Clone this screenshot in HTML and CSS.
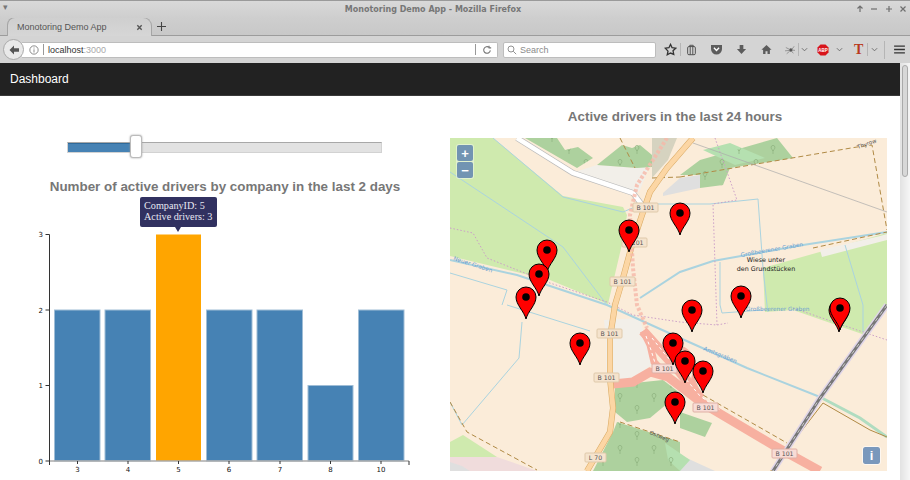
FILE: index.html
```html
<!DOCTYPE html>
<html lang="en">
<head>
<meta charset="utf-8">
<title>Monotoring Demo App</title>
<link rel="stylesheet" href="styles.css">
</head>
<body>
<header class="chrome">
  <div class="titlebar">
    <span class="win-menu">▾</span>
    <span class="win-title">Monotoring Demo App - Mozilla Firefox</span>
    <div class="win-btns">
      <svg class="win-icon" viewBox="0 0 8 8"><path d="M4 7V1M1.500 3.500L4 1l2.500 2.500"/></svg>
      <svg class="win-icon" viewBox="0 0 8 8"><path d="M1 4h6"/></svg>
      <svg class="win-icon" viewBox="0 0 8 8"><path d="M1 4h6M4 1v6"/></svg>
      <svg class="win-icon" viewBox="0 0 8 8"><path d="M1.500 1.500l5 5M6.500 1.500l-5 5"/></svg>
    </div>
  </div>
  <div class="tabstrip">
    <div class="tab">
      <span class="tab-label">Monotoring Demo App</span>
      <svg class="tab-close" viewBox="0 0 8 8"><path d="M1.500 1.500l5 5M6.500 1.500l-5 5"/></svg>
    </div>
    <svg class="new-tab" viewBox="0 0 10 10"><path d="M5 0v10M0 5h10"/></svg>
  </div>
  <div class="navrow">
    <div class="back-btn"><svg viewBox="0 0 12 12"><path d="M6 1.500L1.500 6 6 10.500V7.800h5V4.200H6z"/></svg></div>
    <div class="urlbar">
      <svg class="info-icon" viewBox="0 0 12 12"><circle cx="6" cy="6" r="5"/><path d="M6 5.200V9M6 3v1.200"/></svg>
      <span class="url-sep"></span>
      <span class="url-host">localhost</span><span class="url-port">:3000</span>
      <span class="url-grow"></span>
      <span class="url-sep url-sep-end"></span>
      <svg class="reload-icon" viewBox="0 0 12 12"><path d="M10 6.500A4 4 0 1 1 8.500 2.800M8.500 .8v2.600H11"/></svg>
    </div>
    <div class="searchbar">
      <svg class="search-icon" viewBox="0 0 12 12"><circle cx="4.800" cy="4.800" r="3.600"/><path d="M7.500 7.500L11 11"/></svg>
      <span class="search-text">Search</span>
    </div>
    <div class="toolbar">
      <svg class="tool t-star" viewBox="0 0 14 14"><path d="M7 1.500l1.700 3.600 3.900.5-2.900 2.700.8 3.900L7 10.800l-3.500 1.900.8-3.900L1.400 5.600l3.900-.5z"/></svg>
      <span class="tool-sep sep-a"></span>
      <svg class="tool t-clip" viewBox="0 0 12 14"><rect x="1.500" y="3" width="9" height="9.500" rx="1.500"/><path d="M4 3V1.500h4V3M4.500 3v9.500M7.500 3v9.500"/></svg>
      <svg class="tool t-pocket" viewBox="0 0 14 12"><path class="solid" d="M1 1h12v4.500a6 6 0 0 1-12 0z"/><path class="cut" d="M4.200 4.200L7 7l2.800-2.800"/></svg>
      <svg class="tool t-down" viewBox="0 0 12 12"><path class="solid" d="M4 1h4v4.500h3L6 11 1 5.500h3z"/></svg>
      <svg class="tool t-home" viewBox="0 0 12 12"><path class="solid" d="M6 1L.5 6.200h1.800V11h2.600V7.800h2.200V11h2.600V6.200h1.800z"/></svg>
      <svg class="tool t-spider" viewBox="0 0 14 12"><circle class="spider-body" cx="8" cy="6" r="2"/><path d="M2 3l4 2M1 7l5-.5M3 10.500l3.500-3M12 1.500L9.500 5M13 6.500l-4-.5M11 10L9 7.500"/></svg>
      <span class="tool-sep sep-s"></span>
      <svg class="tool t-chev t-chev-s" viewBox="0 0 8 5"><path d="M1 1l3 3 3-3"/></svg>
      <svg class="tool t-abp" viewBox="0 0 12 12"><path class="solid" d="M3.500 .5h5l3 3v5l-3 3h-5l-3-3v-5z"/><text x="6" y="7.700">ABP</text></svg>
      <svg class="tool t-chev t-chev-a" viewBox="0 0 8 5"><path d="M1 1l3 3 3-3"/></svg>
      <span class="t-letter">T</span>
      <span class="tool-sep sep-b"></span>
      <svg class="tool t-chev t-chev-last" viewBox="0 0 8 5"><path d="M1 1l3 3 3-3"/></svg>
      <span class="tool-sep sep-c"></span>
      <svg class="tool t-menu" viewBox="0 0 12 10"><path d="M0 1.200h12M0 5h12M0 8.800h12"/></svg>
    </div>
  </div>
</header>

<div class="viewport">
  <main class="app">
    <nav class="navbar"><span class="brand">Dashboard</span></nav>
    <div class="columns">
      <section class="left">
        <div class="slider">
          <div class="slider-fill"></div>
          <div class="slider-handle"></div>
        </div>
        <h2 class="heading heading-chart">Number of active drivers by company in the last 2 days</h2>
        <div class="chart">
          <div class="tooltip">CompanyID: 5<br>Active drivers: 3</div>
          <svg class="chart-svg" viewBox="0 0 450 260">
            <g class="bars">
              <rect x="54.500" y="85" width="45.500" height="151"/>
              <rect x="105" y="85" width="45.500" height="151"/>
              <rect class="bar-hi" x="156" y="9.500" width="45" height="226.500"/>
              <rect x="206.500" y="85" width="45.500" height="151"/>
              <rect x="257" y="85" width="45.500" height="151"/>
              <rect x="308" y="160.500" width="45" height="75.500"/>
              <rect x="358.500" y="85" width="45.500" height="151"/>
            </g>
            <path class="axis-x" d="M49.500 236H409"/>
            <path class="axis" d="M45.500 9.500h4V240M45.500 85h4M45.500 160.500h4M45.500 236h4M77.500 236v3M128 236v3M178.500 236v3M229 236v3M280 236v3M330.500 236v3M381 236v3M409 236v4"/>
            <g class="ticks-y">
              <text x="43" y="12">3</text><text x="43" y="87.500">2</text><text x="43" y="163">1</text><text x="43" y="238.500">0</text>
            </g>
            <g class="ticks-x">
              <text x="77.500" y="247">3</text><text x="128" y="247">4</text><text x="178.500" y="247">5</text><text x="229" y="247">6</text><text x="280" y="247">7</text><text x="330.500" y="247">8</text><text x="381" y="247">10</text>
            </g>
          </svg>
        </div>
      </section>
      <section class="right">
        <h2 class="heading heading-map">Active drivers in the last 24 hours</h2>
        <div class="map">
          <svg class="map-svg" viewBox="450 138 437 333">
            <defs>
              <symbol id="pin" viewBox="-11 -11 22 34" overflow="visible">
                <path class="pin-body" d="M0 22C-2 14-10 8-10 0A10 10 0 1 1 10 0C10 8 2 14 0 22Z"/>
                <circle class="pin-dot" r="3.800"/>
              </symbol>
              <pattern id="trees" width="34" height="26" patternUnits="userSpaceOnUse">
                <path class="tree" d="M8 12V8M8 9L6 6M8 9l2-3M6 6a1.500 2 0 0 1 4 0M25 24v-4M25 21l-2-3M25 21l2-3M23 18a1.500 2 0 0 1 4 0"/>
              </pattern>
            </defs>
            <rect class="land" x="450" y="138" width="437" height="333"/>
            <!-- areas -->
            <path class="meadow" d="M450 138H493L563 196 623 207 627 215 623 240 608 304 550 280 450 256Z"/>
            <path class="meadow" d="M763 268L887 233V305L865 335 793 310 765 312Z"/>
            <path class="meadow" d="M450 442L463 435 497 457H450Z"/>
            <path class="residential" d="M450 457H497L537 471H450Z"/>
            <path class="greyland" d="M450 471V462L462 466 470 471Z"/>
            <path class="greyland" d="M663 193L680 178 700 175V188L663 196Z"/>
            <path class="greyland" d="M665 442L680 455 715 471H665Z"/>
            <path class="pale" d="M575 172L597 165 637 168 650 165 640 190 635 196Z"/>
            <path class="pale" d="M604 320L640 318 652 365 632 378 606 383 606 340Z"/>
            <path class="pale" d="M820 250L880 236 887 234 887 240 822 257Z"/>
            <path class="tan" d="M652 138H677L668 160 652 178Z"/>
            <path class="forest" d="M525 138H557L565 150 578 147 593 158 577 168Z"/>
            <path class="forest" d="M597 165L622 145 632 148 640 145 652 155 652 167 637 168Z"/>
            <path class="forest" d="M680 175L700 160 777 138 793 158 730 168 723 185 700 188 700 175Z"/>
            <path class="forest" d="M615 385L663 380 680 393 650 418 627 422 615 412Z"/>
            <path class="forest" d="M617 422L680 442 680 471H593L613 432Z"/>
            <path class="forest" d="M680 412L712 423 705 437 680 428Z"/>
            <path class="forest" d="M658 345L668 352 665 358Z"/>
            <path class="forest-light" d="M665 443L690 460 680 471 668 460Z"/>
            <path class="forest-light" d="M703 150L730 143 765 158 735 165Z"/>
            <path class="trees-fill" d="M525 138H557L565 150 578 147 593 158 577 168Z"/>
            <path class="trees-fill" d="M597 165L622 145 640 145 652 155 652 167Z"/>
            <path class="trees-fill" d="M680 175L700 160 777 138 793 158 730 168 723 185 700 188Z"/>
            <path class="trees-fill" d="M615 385L663 380 680 393 650 418 627 422 615 412Z"/>
            <path class="trees-fill" d="M617 422L680 442 680 471H593L613 432Z"/>
            <!-- thin waters -->
            <path class="stream" d="M493 138L563 197 623 212 642 204H680L710 204 758 199 763 268 767 305 768 312"/>
            <path class="stream" d="M450 172L563 247 607 305"/>
            <path class="stream" d="M450 273L507 290 502 305M507 305L590 331M522 322L519 358 462 425 450 402"/>
            <path class="stream" d="M720 262V305L722 313 763 310M845 245L863 305V332"/>
            <!-- canals -->
            <path class="canal" d="M450 260L517 275 607 305 680 338 747 368 820 397"/>
            <path class="canal" d="M640 298L680 272 713 261 803 245 887 232"/>
            <path class="canal-green" d="M820 397L860 418 887 437"/>
            <!-- boundaries -->
            <path class="dotted" d="M450 228L473 233 487 258 550 283 607 302 633 315 680 322 717 325 728 323M715 138L737 200 713 204 717 325M793 308L863 332 887 340"/>
            <path class="border" d="M680 177L857 147 872 145 887 230M813 248L887 232M450 402L467 432 537 470M620 422L680 442M703 395L787 443M620 138L635 168M652 178L680 177"/>
            <path class="border-solid" d="M823 403L770 472M823 403L870 430 887 437"/>
            <path class="power" d="M693 143L887 212"/>
            <!-- roads -->
            <path class="road-white-case" d="M517 138L573 173 633 193 642 205"/>
            <path class="road-white" d="M517 138L573 173 633 193 642 205"/>
            <path class="trunk" d="M613 384L633 382 650 372 668 377 702 403 773 445 820 471"/>
            <path class="ramp-a" d="M643 331L650 345 654 362 668 377"/>
            <path class="ramp-b" d="M643 331L660 350 680 372 700 398"/>
            <path class="ramp-loop" d="M668 346Q686 345 692 358 696 368 693 380L703 402"/>
            <path class="trunk-dash" d="M646 336L651 350 655 363M652 338L664 353 680 372 700 396 720 410"/>
            <path class="primary-case" d="M693 138L667 168 650 192 642 215 632 245 623 278 615 305 610 338 610 378 613 408 610 432 587 471"/>
            <path class="primary" d="M693 138L667 168 650 192 642 215 632 245 623 278 615 305 610 338 610 378 613 408 610 432 587 471"/>
            <path class="rail-path" d="M667 138L637 185 630 215 633 268 637 305 647 328"/>
            <path class="rail-case" d="M887 305L820 398 773 471"/>
            <path class="rail" d="M887 305L820 398 773 471"/>
            <path class="rail-dash" d="M887 305L820 398 773 471"/>
            <!-- labels -->
            <g class="shield">
              <rect x="633" y="203" width="25" height="9" rx="1"/><rect x="622" y="238" width="25" height="9" rx="1"/><rect x="610" y="277" width="25" height="9" rx="1"/><rect x="597" y="329" width="25" height="9" rx="1"/><rect x="594" y="373" width="25" height="9" rx="1"/><rect x="585" y="453" width="21" height="9" rx="1"/>
            </g>
            <g class="shield shield-red">
              <rect x="652" y="364" width="25" height="9" rx="1"/><rect x="693" y="403" width="25" height="9" rx="1"/><rect x="772" y="449" width="25" height="9" rx="1"/>
            </g>
            <g class="shield-text">
              <text x="645.500" y="210">B 101</text><text x="634.500" y="245">B 101</text><text x="622.500" y="284">B 101</text><text x="609.500" y="336">B 101</text><text x="606.500" y="380">B 101</text><text x="595.500" y="460">L 70</text><text x="664.500" y="371">B 101</text><text x="705.500" y="410">B 101</text><text x="784.500" y="456">B 101</text>
            </g>
            <g class="water-text">
              <text transform="translate(453 260) rotate(18)">Neuer Graben</text>
              <text transform="translate(741 257) rotate(-10)">Großbeerener Graben</text>
              <text transform="translate(746 311)">Großbeerener Graben</text>
              <text transform="translate(703 350) rotate(22)">Amtsgraben</text>
            </g>
            <g class="place-text">
              <text x="766" y="262">Wiese unter</text>
              <text x="766" y="271">den Grundstücken</text>
            </g>
            <text class="way-text" transform="translate(649 434) rotate(22)">Ostweg</text>
            <text class="way-text" transform="translate(858 149) rotate(-20)">Thyrow</text>
            <!-- pins -->
            <g class="pins">
              <use href="#pin" x="669" y="202" width="22" height="34"/>
              <use href="#pin" x="618" y="219" width="22" height="34"/>
              <use href="#pin" x="536" y="239" width="22" height="34"/>
              <use href="#pin" x="528" y="263" width="22" height="34"/>
              <use href="#pin" x="515" y="286" width="22" height="34"/>
              <use href="#pin" x="681" y="299" width="22" height="34"/>
              <use href="#pin" x="730" y="285" width="22" height="34"/>
              <use href="#pin" x="828" y="299" width="22" height="34"/>
              <use href="#pin" x="829" y="297" width="22" height="34"/>
              <use href="#pin" x="569" y="332" width="22" height="34"/>
              <use href="#pin" x="662" y="332" width="22" height="34"/>
              <use href="#pin" x="664" y="391" width="22" height="34"/>
              <use href="#pin" x="674" y="350" width="22" height="34"/>
              <use href="#pin" x="692" y="360" width="22" height="34"/>
            </g>
          </svg>
          <div class="zoom-ctl">
            <span class="zoom-btn">+</span>
            <span class="zoom-btn">−</span>
          </div>
          <span class="map-info">i</span>
        </div>
      </section>
    </div>
  </main>
  <div class="scrollbar"><div class="scroll-thumb"></div></div>
</div>
</body>
</html>
```
FILE: styles.css
```css
* { box-sizing: border-box; }
html, body { margin: 0; height: 100%; overflow: hidden; }
body { display: flex; flex-direction: column; background: #fff; font-family: "Liberation Sans", Arial, sans-serif; }

/* browser chrome */
.chrome { flex: none; height: 63px; display: flex; flex-direction: column; background: #cfcfcf; }
.titlebar { height: 18px; display: flex; align-items: center; justify-content: center; padding-right: 44px; position: relative; background: linear-gradient(#d9d9d9, #cecece); border-top: 1px solid #9a9a9a; }
.win-menu { position: absolute; left: 3px; top: 1px; font-size: 9px; color: #777; }
.win-title { font: bold 8px "DejaVu Sans", sans-serif; color: #777; }
.win-btns { position: absolute; right: 3px; top: 4px; display: flex; gap: 6.500px; }
.win-icon { width: 8px; height: 8px; fill: none; stroke: #6f6f6f; stroke-width: 1.200; }
.tabstrip { height: 18px; display: flex; align-items: flex-end; background: linear-gradient(#cecece, #c8c8c8); border-bottom: 1px solid #9c9c9c; padding-left: 7px; }
.tab { width: 145px; height: 19px; margin-bottom: -1px; display: flex; align-items: center; justify-content: space-between; padding: 0 8px 0 9px; background: linear-gradient(#cfcfcf, #d6d6d6); border: 1px solid #a5a5a5; border-bottom: 0; border-radius: 8px 9px 0 0; }
.tab-label { font: 9px "Liberation Sans", sans-serif; color: #555; }
.tab-close { width: 7px; height: 7px; fill: none; stroke: #555; stroke-width: 1.600; }
.new-tab { width: 9px; height: 9px; margin: 0 0 4px 5px; fill: none; stroke: #444; stroke-width: 1.200; }
.navrow { flex: 1; display: flex; align-items: center; padding: 0 0 0 3px; background: #d4d4d4; position: relative; }
.back-btn { width: 21px; height: 21px; flex: none; display: flex; align-items: center; justify-content: center; border: 1px solid #a9a9a9; border-radius: 50%; background: #e9e9e9; z-index: 1; }
.back-btn svg { width: 12px; height: 12px; fill: #555; }
.urlbar { width: 476px; height: 16px; margin-left: -2px; display: flex; align-items: center; padding-left: 7px; background: #fff; border: 1px solid #bdbdbd; border-left: 0; border-radius: 0 2px 2px 0; font: 9px "Liberation Sans", sans-serif; }
.info-icon { width: 10px; height: 10px; fill: none; stroke: #666; stroke-width: .9; flex: none; }
.url-sep { width: 1px; height: 11px; background: #999; margin: 0 4px; flex: none; }
.url-host { color: #333; }
.url-port { color: #aaa; }
.url-grow { flex: 1; }
.url-sep-end { margin: 0 6px 0 0; }
.reload-icon { width: 10px; height: 10px; margin-right: 5px; fill: none; stroke: #777; stroke-width: 1.300; flex: none; }
.searchbar { width: 153px; height: 16px; margin-left: 5px; display: flex; align-items: center; gap: 3px; padding-left: 3px; background: #fff; border: 1px solid #bdbdbd; border-radius: 2px; }
.search-icon { width: 10px; height: 10px; fill: none; stroke: #888; stroke-width: 1.100; }
.search-text { font: 9px "Liberation Sans", sans-serif; color: #8a8a8a; }
.toolbar { flex: 1; height: 100%; display: flex; align-items: center; position: relative; }
.tool { flex: none; fill: none; stroke: #4d4d4d; }
.t-star { width: 13px; height: 13px; margin-left: 8px; stroke: #333; stroke-width: 1.400; }
.tool-sep { width: 1px; height: 13px; background: #b5b5b5; flex: none; }
.sep-a { margin-left: 3px; }
.t-clip { width: 11px; height: 12px; margin-left: 5px; stroke-width: 1.100; }
.t-pocket { width: 13px; height: 11px; margin-left: 13px; stroke: none; }
.solid { fill: #5c5c5c; stroke: none; }
.cut { fill: none; stroke: #fff; stroke-width: 1.500; }
.t-down { width: 11px; height: 11px; margin-left: 13px; stroke: none; }
.t-home { width: 11px; height: 11px; margin-left: 14px; stroke: none; }
.t-spider { width: 12px; height: 10px; margin-left: 12px; stroke: #777; stroke-width: .8; }
.spider-body { fill: #555; stroke: none; }
.sep-s { margin-left: 2px; }
.t-chev { width: 7px; height: 5px; stroke: #666; stroke-width: 1; }
.t-chev-s { margin-left: 2px; }
.t-abp { width: 12px; height: 12px; margin-left: 9px; stroke: none; }
.t-abp .solid { fill: #d8141a; }
.t-abp text { font: bold 4.500px "Liberation Sans", sans-serif; fill: #fff; text-anchor: middle; }
.t-chev-a { margin-left: 7px; }
.t-letter { font: bold 14px "Liberation Serif", serif; color: #b93a1d; margin-left: 11px; width: 10px; }
.sep-b { margin-left: 3px; }
.t-chev-last { margin-left: 3px; }
.sep-c { margin-left: 6px; height: 18px; }
.t-menu { width: 11px; height: 9px; margin-left: 9px; stroke: #333; stroke-width: 1.500; }

/* viewport */
.viewport { flex: 1; min-height: 0; display: flex; }
.app { flex: 1; min-width: 0; overflow: hidden; }
.navbar { height: 33px; display: flex; align-items: center; padding-left: 10px; background: #222; border-bottom: 1px solid #3a3a3a; }
.brand { color: #fff; font-size: 12px; }
.columns { display: flex; }
.left { width: 450px; flex: none; padding-top: 46px; }
.right { width: 437px; flex: none; padding-top: 13px; }

.slider { position: relative; width: 315px; height: 11px; margin-left: 67px; background: #e2e2e2; border: 1px solid #d2d2d2; border-top-color: #a8a8a8; }
.slider-fill { width: 63px; height: 100%; background: #4682b4; box-shadow: inset 0 1px #2f6a9a; }
.slider-handle { position: absolute; left: 62px; top: -8px; width: 12px; height: 23px; background: #fff; border: 1px solid #bbb; border-radius: 3px; box-shadow: 0 0 2px #999; }

.heading { margin: 0; font-size: 13.400px; font-weight: bold; color: #777; text-align: center; line-height: 16px; }
.heading-chart { margin-top: 26px; width: 450px; }
.heading-map { margin-bottom: 13px; width: 450px; }

.chart { position: relative; margin-top: 30px; }
.chart-svg { display: block; width: 450px; height: 260px; overflow: visible; }
.bars rect { fill: #4682b4; stroke: #9fbdd6; stroke-width: 1; }
.bars .bar-hi { fill: orange; stroke: none; }
.axis { fill: none; stroke: #333; stroke-width: 1; }
.axis-x { fill: none; stroke: #aaa; stroke-width: 1.500; }
.ticks-y text, .ticks-x text { font: 7px "DejaVu Sans", sans-serif; fill: #111; }
.ticks-y text { text-anchor: end; }
.ticks-x text { text-anchor: middle; }
.tooltip { position: absolute; left: 140px; top: -28px; width: 77px; height: 30px; padding: 3px 4px; background: #313160; border-radius: 2px; color: #e8e8f2; font: 10.200px/11px "Liberation Serif", serif; white-space: nowrap; z-index: 1; }
.tooltip::after { content: ""; position: absolute; left: 35px; top: 30px; border: 3px solid transparent; border-top: 5px solid #313160; }

.map { position: relative; width: 437px; height: 333px; overflow: hidden; }
.map-svg { display: block; width: 437px; height: 333px; }
.land { fill: #fbecd9; }
.meadow { fill: #cfeaae; }
.residential { fill: #f0dcdc; }
.greyland { fill: #dfdfdf; }
.pale { fill: #f2efe9; }
.tan { fill: #d6d3c0; }
.forest { fill: #add19e; }
.forest-light { fill: #b5e0b0; }
.trees-fill { fill: url(#trees); }
.tree { fill: none; stroke: #8cb07c; stroke-width: .7; }
.stream { fill: none; stroke: #aad3df; stroke-width: 1; }
.canal { fill: none; stroke: #aad3df; stroke-width: 2; }
.canal-green { fill: none; stroke: #b0dcc0; stroke-width: 3; }
.dotted { fill: none; stroke: #cc9fc8; stroke-width: 1; stroke-dasharray: 1.500 2; }
.border { fill: none; stroke: #b08a45; stroke-width: 1; stroke-dasharray: 5 3; }
.border-solid { fill: none; stroke: #b08a45; stroke-width: 1; }
.power { fill: none; stroke: #aaa; stroke-width: .7; }
.road-white-case { fill: none; stroke: #bbb; stroke-width: 6; }
.road-white { fill: none; stroke: #fff; stroke-width: 4.500; }
.trunk { fill: none; stroke: #f7b0a0; stroke-width: 9; }
.ramp-a { fill: none; stroke: #f7b0a0; stroke-width: 7; }
.ramp-b { fill: none; stroke: #f7b0a0; stroke-width: 10; }
.ramp-loop { fill: none; stroke: #f7b0a0; stroke-width: 4; }
.trunk-dash { fill: none; stroke: #fff; stroke-width: 1; stroke-dasharray: 3 3; }
.primary-case { fill: none; stroke: #d8a860; stroke-width: 6; }
.primary { fill: none; stroke: #fcd6a4; stroke-width: 5; }
.rail-path { fill: none; stroke: #f6b8a8; stroke-width: 4; stroke-dasharray: 3 2; opacity: .8; }
.rail-case { fill: none; stroke: #dfd5e8; stroke-width: 6; }
.rail { fill: none; stroke: #777; stroke-width: 3; }
.rail-dash { fill: none; stroke: #ccc; stroke-width: 1; stroke-dasharray: 4 4; }
.shield rect { fill: #f5e3cd; stroke: #dfc9aa; stroke-width: 1; }
.shield-red rect { fill: #f8dcd6; stroke: #e0b0a5; }
.shield-text text { font: 6.200px "DejaVu Sans", sans-serif; fill: #555; text-anchor: middle; }
.water-text text { font: 5.800px "DejaVu Sans", sans-serif; fill: #6d9fd0; }
.place-text text { font: 6.400px "DejaVu Sans", sans-serif; fill: #222; text-anchor: middle; }
.way-text { font: 5.500px "DejaVu Sans", sans-serif; fill: #555; }
.pin-body { fill: #f00; stroke: #000; stroke-width: 1; }
.pin-dot { fill: #000; }

.zoom-ctl { position: absolute; left: 6px; top: 6px; display: flex; flex-direction: column; gap: 1px; padding: 1px; background: rgba(255,255,255,.4); border-radius: 3px; }
.zoom-btn { width: 16px; height: 16px; display: flex; align-items: center; justify-content: center; background: #7294b2; color: #fff; font: bold 13px "Liberation Sans", sans-serif; border-radius: 2px; }
.map-info { position: absolute; left: 413px; top: 309px; width: 17px; height: 17px; display: flex; align-items: center; justify-content: center; background: #7a98bc; color: #fff; font: bold 13px "Liberation Sans", sans-serif; border-radius: 2px; outline: 1px solid rgba(255,255,255,.6); }

.scrollbar { width: 10px; flex: none; padding: 2px 2px; background: linear-gradient(90deg, #e2e2e2, #f6f6f6); }
.scroll-thumb { height: 112px; background: #d8d8d8; border: 1px solid #aaa; border-radius: 4px; }
```
